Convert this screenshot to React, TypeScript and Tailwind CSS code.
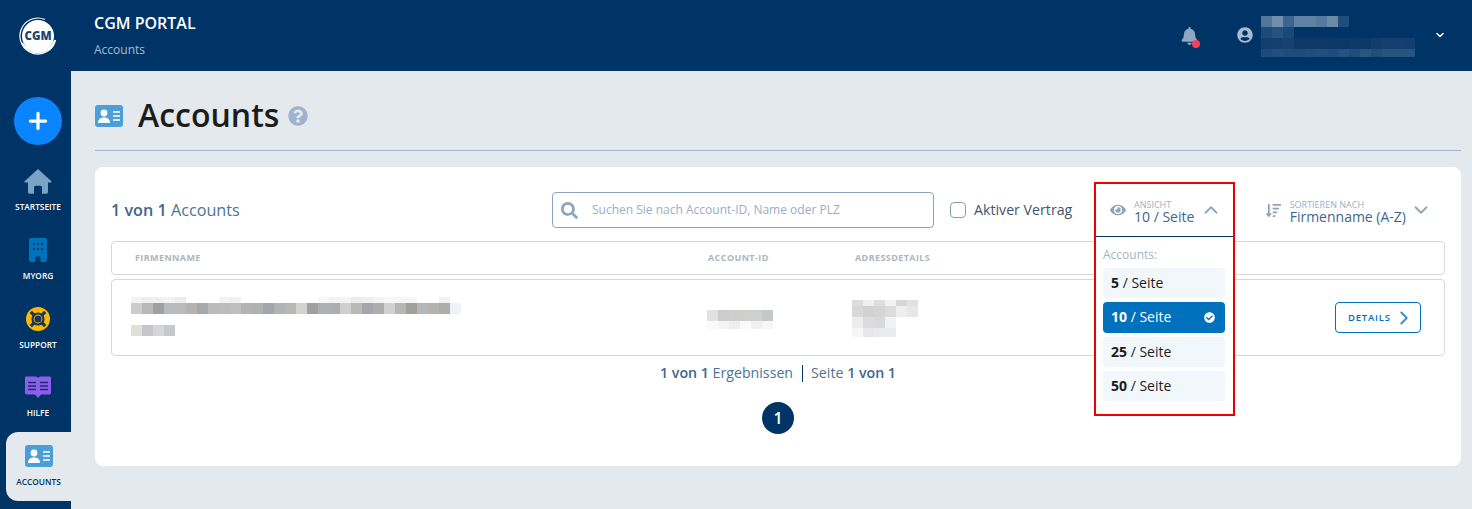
import { ChevronDown, ChevronRight, ChevronUp, Plus } from "lucide-react";
import { FaBell, FaCheckCircle, FaEye, FaQuestionCircle, FaSearch, FaSortAmountDown, FaUserCircle } from "react-icons/fa";

// blurred areas of the screenshot, one colour per mosaic cell
function Mosaic({ rows, cell = 11, heights }: { rows: string[][]; cell?: number; heights?: number[] }) {
  return (
    <div className="flex flex-col">
      {rows.map((row, i) => (
        <div key={i} className="flex" style={{ height: heights ? heights[i] : cell }}>
          {row.map((c, j) => (
            <div key={j} style={{ width: cell, background: c }} />
          ))}
        </div>
      ))}
    </div>
  );
}

function Logo() {
  return (
    <svg viewBox="0 0 40 40" className="w-10 h-10">
      <circle cx="20" cy="20" r="16" fill="#fff" />
      <path d="M27 3.500A18 18 0 1 0 37.500 24" fill="none" stroke="#fff" strokeWidth="1.200" />
      <path d="M4 27a18 18 0 0 0 33-3" fill="none" stroke="#fff" strokeWidth="2" />
      <text x="20" y="24" textAnchor="middle" fontSize="11.500" fontWeight="800" fill="#1d4573">
        CGM
      </text>
    </svg>
  );
}

function IdCard({ className }: { className?: string }) {
  return (
    <svg viewBox="0 0 28 22" className={className}>
      <rect width="28" height="22" rx="3" fill="#4c9ed6" />
      <circle cx="9" cy="8" r="3.400" fill="#fff" />
      <path d="M3 18c0-4 2.500-5.600 6-5.600s6 1.600 6 5.600z" fill="#fff" />
      <path d="M18 7h7M18 11h7M18 15h7" stroke="#fff" strokeWidth="1.500" />
    </svg>
  );
}

function House() {
  return (
    <svg viewBox="0 0 28 25" className="w-7 h-[25px]">
      <path
        d="M14 0l13.400 12.300c.5.500.2 1.200-.5 1.200H24v9.500c0 1-.7 1.700-1.700 1.700H18v-6.200c0-1-.8-1.800-1.800-1.800h-4.400c-1 0-1.800.8-1.800 1.800v6.200H5.700C4.700 24.700 4 24 4 23v-9.500H1.100c-.7 0-1-.7-.5-1.200z"
        fill="#7ba3c4"
      />
    </svg>
  );
}

function Building() {
  return (
    <svg viewBox="0 0 18 24" className="w-[18px] h-6">
      <path
        d="M2 0h14c1.100 0 2 .9 2 2v20c0 1.100-.9 2-2 2h-4.500v-4c0-.8-.7-1.500-1.500-1.500H8c-.8 0-1.500.7-1.500 1.500v4H2c-1.100 0-2-.9-2-2V2C0 .9.900 0 2 0z"
        fill="#0071bc"
      />
      <path
        d="M4 5h2v2H4zM8 5h2v2H8zM12 5h2v2h-2zM4 10h2v2H4zM8 10h2v2H8zM12 10h2v2h-2z"
        fill="#12396a"
      />
    </svg>
  );
}

function LifeRing() {
  return (
    <svg viewBox="0 0 24 24" className="w-6 h-6">
      <circle cx="12" cy="12" r="12" fill="#fdb900" />
      <path d="M4.800 4.800l3 3M19.200 4.800l-3 3M4.800 19.200l3-3M19.200 19.200l-3-3" stroke="#14365f" strokeWidth="3.200" />
      <circle cx="12" cy="12" r="5.500" fill="#fdb900" stroke="#14365f" strokeWidth="2.200" />
      <circle cx="12" cy="12" r="3.500" fill="#14365f" />
    </svg>
  );
}

function Book() {
  return (
    <svg viewBox="0 0 28 22" className="w-7 h-[22px]">
      <path
        d="M1 2C1 1 1.600.4 2.400.4H10c2 0 3.300.5 4 1.400C14.700.9 16 .4 18 .4h7.600c.8 0 1.400.6 1.400 1.600v15c0 .8-.6 1.400-1.400 1.400H17L14 22l-3-3.600H2.400C1.600 18.400 1 17.800 1 17z"
        fill="#8f5cf0"
      />
      <path d="M4 6.500h8M4 10h8M4 13.500h8M16 6.500h8M16 10h8M16 13.500h8" stroke="#14365f" strokeWidth="1.600" />
    </svg>
  );
}

function NavItem({ icon, label, className }: { icon: React.ReactNode; label: string; className: string }) {
  return (
    <div className={`flex flex-col items-center ${className}`}>
      <div className="h-7 flex items-center justify-center">{icon}</div>
      <div className="mt-[5px] text-[8.300px] leading-[14px] font-semibold uppercase">{label}</div>
    </div>
  );
}

function PageOption({ n, active }: { n: number; active?: boolean }) {
  return (
    <div
      className={`h-[30.300px] rounded flex items-center justify-between px-2 text-sm ${
        active ? "bg-[#0071bc] text-white" : "bg-[#f2f7fb] text-[#1c1c1c]"
      }`}
    >
      <span>
        <b className="font-bold">{n}</b> / Seite
      </span>
      {active && <FaCheckCircle className="w-[11px] h-[11px] text-white mr-[2px]" />}
    </div>
  );
}

export default function App() {
  return (
    <div className="h-[509px] flex overflow-hidden bg-[#003366] font-['Open_Sans',sans-serif]">
      <aside className="w-[71px] shrink-0 flex flex-col">
        <div className="h-[71px] pl-[5px] flex items-center justify-center">
          <Logo />
        </div>
        <div className="mt-[26px] mb-[11px] pl-[5px] flex justify-center">
          <div className="w-12 h-12 rounded-full bg-[#0a84ff] flex items-center justify-center">
            <Plus className="w-[26px] h-[26px] text-white" strokeWidth={3} />
          </div>
        </div>
        <NavItem icon={<House />} label="Startseite" className="h-[69px] pt-[11px] pl-[5px] text-white" />
        <NavItem icon={<Building />} label="MyOrg" className="h-[69px] pt-[11px] pl-[5px] text-white" />
        <NavItem icon={<LifeRing />} label="Support" className="h-[68px] pt-[11px] pl-[5px] text-white" />
        <NavItem icon={<Book />} label="Hilfe" className="h-[70px] pt-[11px] pl-[5px] text-white" />
        <NavItem
          icon={<IdCard className="w-7 h-[22px]" />}
          label="Accounts"
          className="h-[69px] pt-[10px] ml-1.5 bg-[#e4e9ed] rounded-l-xl text-[#003366]"
        />
      </aside>

      <div className="flex-1 min-w-0 flex flex-col">
        <header className="h-[71px] shrink-0 flex items-center pr-[26px] text-white">
          <div className="ml-[23px]">
            <div className="text-base leading-[22px] font-semibold -mt-px">CGM PORTAL</div>
            <div className="text-xs leading-4 mt-2 text-[#a9bccf]">Accounts</div>
          </div>
          <div className="ml-auto mr-[39px] relative">
            <FaBell className="w-[17px] h-[18px] text-[#8fa8c2]" />
            <span className="absolute left-[11px] top-[13px] w-2 h-2 rounded-full bg-[#f5405a]" />
          </div>
          <div className="flex items-start mt-[2px]">
            <FaUserCircle className="w-4 h-4 mt-[11px] text-[#a9bccf]" />
            <div className="ml-2">
              <Mosaic
                heights={[11, 11, 11, 8]}
                rows={[
                  ["#4f769b", "#6f8fab", "#3b6590", "#5f82a2", "#5f82a2", "#557a9d", "#6a8ba8", "#1f4d7c"],
                  ["#1d4a78", "#25527f", "#1b4876"],
                  ["#143e6e", "#163f6f", "#17416f", "#10396a", "#0f3969", "#10396a", "#0e3868", "#0d3768", "#0f3969", "#0d3768", "#123c6b", "#163f6f", "#163f6f", "#133d6c"],
                  ["#1d4b79", "#22507e", "#1e4c7a", "#1e4c7a", "#214f7c", "#22507e", "#1f4d7b", "#25537f", "#1f4d7b", "#29567f", "#204e7c", "#27547f", "#27547f", "#27547f"],
                ]}
              />
            </div>
            <ChevronDown className="w-3 h-3 ml-[19px] mt-[13px] text-white" strokeWidth={3} />
          </div>
        </header>

        <main className="flex-1 bg-[#e4e9ed] pl-6 pr-[11px] pt-[28px] text-[#003366]">
          <div className="pb-[17px] border-b border-[#9db6cc]">
            <div className="h-[34px] flex items-center">
              <IdCard className="w-7 h-[22px]" />
              <h1 className="ml-[15px] -mt-[2px] text-[32px] leading-[34px] font-semibold text-[#1c1c1c]">Accounts</h1>
              <FaQuestionCircle className="ml-[9px] w-5 h-5 text-[#9fb3cc]" />
            </div>
          </div>

          <section className="relative mt-4 h-[299px] bg-white rounded-lg px-4 pt-[25px]">
            <div className="flex items-center h-9">
              <div className="w-[441px] text-[16.200px] text-[#4d7396]">
                <b className="font-semibold text-[#3f668c]">1 von 1</b> Accounts
              </div>
              <div className="w-[382px] h-9 border border-[#8aa5bf] rounded flex items-center">
                <FaSearch className="ml-2 w-[17px] h-[17px] text-[#8aa5bf]" />
                <span className="ml-[14px] text-xs text-[#9aaec2]">Suchen Sie nach Account-ID, Name oder PLZ</span>
              </div>
              <div className="ml-4 w-4 h-4 rounded-sm border border-[#8f9ba8]" />
              <span className="ml-2 text-[14.200px] text-[#3f5568]">Aktiver Vertrag</span>
              <div className="ml-auto mr-[13px] flex items-center">
                <FaSortAmountDown className="w-[17px] h-[15px] text-[#8fa5bb]" />
                <div className="ml-2 mt-[3px] text-[#3f668c]">
                  <div className="text-[9px] leading-[9px] text-[#9db0c4] uppercase">Sortieren nach</div>
                  <div className="text-sm leading-[15px]">Firmenname (A-Z)</div>
                </div>
                <ChevronDown className="ml-1 w-[22px] h-[22px] text-[#8fa5bb]" strokeWidth={2} />
              </div>
            </div>

            <div className="mt-[13px] h-[34px] border border-[#d6d8da] rounded flex items-center text-[9px] font-bold text-[#adb5bd] tracking-[0.4px]">
              <span className="ml-[23px] w-[573px]">FIRMENNAME</span>
              <span className="w-[147px]">ACCOUNT-ID</span>
              <span>ADRESSDETAILS</span>
            </div>

            <div className="mt-1 h-[77px] border border-[#d6d8da] rounded flex items-start">
              <div className="ml-[19px] mt-[17px] w-[576px]">
                <Mosaic
                  heights={[6, 11]}
                  rows={[
                    ["#f4f3f2", "#eeeeee", "#eff0f2", "#f3f3f3", "#ececec", "#fff", "#fff", "#fff", "#f3f2f2", "#eff0f0", "#fff", "#fff", "#fff", "#fff", "#fff", "#fff", "#fff", "#f6f7f7", "#f3f3f3", "#f5f4f3", "#ebebee", "#eeeeef", "#f3f3f3", "#f6f7f7", "#f5f5f5", "#f7f7f7", "#fff", "#fff", "#f1f1f1"],
                    ["#cccccc", "#b9b9b9", "#a0a0a2", "#b9babd", "#b9babb", "#b8b3ae", "#a3a9b0", "#b9bcbc", "#bfbbb9", "#bdc0c2", "#b6b4b2", "#b1b1b1", "#a3a5ac", "#b1b3b5", "#b6b8b8", "#d4d2cf", "#a0a0a0", "#aeb0b2", "#acaeb0", "#cfcfcf", "#bbb9b6", "#a2a7ad", "#adadad", "#d0d1d3", "#b8b6b3", "#a09e9e", "#b2b7b9", "#b3b3b2", "#aeadac", "#eef2f7"],
                  ]}
                />
                <div className="mt-[11px]">
                  <Mosaic rows={[["#e0dfdc", "#c5c6cb", "#d6d6d6", "#c6c9cc"]]} />
                </div>
              </div>
              <div className="mt-[30px] w-[145px]">
                <Mosaic
                  heights={[11, 8]}
                  rows={[
                    ["#e2e2e2", "#cccccc", "#cfcecd", "#d0cfce", "#cfcfcf", "#c4c8cb"],
                    ["#fafafa", "#f4f4f4", "#eeeeee", "#fafafa", "#f0f0f0", "#f6f6f6"],
                  ]}
                />
              </div>
              <div className="mt-[20px]">
                <Mosaic
                  heights={[6, 11, 11, 9]}
                  rows={[
                    ["#dcdde0", "#efeff1", "#dcdde0", "#f2f2f3", "#d8d7d4", "#dfe1e5"],
                    ["#d8d8da", "#d2d1cf", "#d3d4d8", "#dddcda", "#eeeeec", "#e6e7ea"],
                    ["#ededed", "#dcdcdd", "#d9d9db", "#f1f2f2", "#fff", "#fff"],
                    ["#f6f6f6", "#e6e7ea", "#ebebed", "#e9ebee", "#fff", "#fff"],
                  ]}
                />
              </div>
              <div className="ml-auto mr-[23px] mt-[22px] w-[86px] h-[31px] border border-[#0071bc] rounded flex items-center pl-3 text-[9.500px] font-semibold tracking-[0.8px] text-[#0071bc]">
                <span className="pt-0.5">DETAILS</span>
                <ChevronRight className="ml-0.5 w-[22px] h-[22px] text-[#3a8bc8]" strokeWidth={2} />
              </div>
            </div>

            <div className="mt-[7px] h-5 flex items-center justify-center text-[14.200px] text-[#4d7396] whitespace-pre">
              <b className="font-semibold text-[#3f668c]">1 von 1</b> Ergebnissen
              <span className="w-px h-[17px] mx-[8.500px] bg-[#003366]" />
              Seite <b className="font-semibold text-[#3f668c]">1 von 1</b>
            </div>
            <div className="mt-[19px] mx-auto w-8 h-8 rounded-full bg-[#003366] flex items-center justify-center text-white text-base font-semibold">
              1
            </div>

            {/* open "Ansicht" menu, highlighted in red */}
            <div className="absolute left-[999px] top-[15px] w-[141px] h-[234px] border-2 border-[#ee0000] bg-white">
              <div className="h-[53px] border-b border-[#003366] flex items-center pl-[14px]">
                <FaEye className="w-4 h-4 text-[#8fa5bb]" />
                <div className="ml-2 mt-[3px] text-[#3f668c]">
                  <div className="text-[9px] leading-[9px] text-[#9db0c4] uppercase">Ansicht</div>
                  <div className="text-sm leading-[15px]">10 / Seite</div>
                </div>
                <ChevronUp className="ml-1.5 w-[22px] h-[22px] text-[#8fa5bb]" strokeWidth={2} />
              </div>
              <div className="pl-[7px] pr-2 pt-[10px]">
                <div className="text-xs leading-4 text-[#a3b4c6]">Accounts:</div>
                <div className="mt-[5px] flex flex-col gap-1">
                  <PageOption n={5} />
                  <PageOption n={10} active />
                  <PageOption n={25} />
                  <PageOption n={50} />
                </div>
              </div>
            </div>
          </section>
        </main>
      </div>
    </div>
  );
}
